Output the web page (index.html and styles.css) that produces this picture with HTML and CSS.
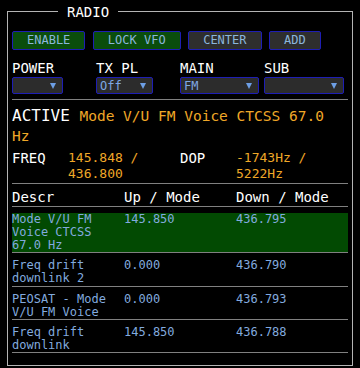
FILE: index.html
```html
<!DOCTYPE html>
<html lang="en">
<head>
    <meta charset="UTF-8">
    <title>Radio</title>
    <link rel="stylesheet" href="styles.css">
</head>
<body>
    <fieldset class="panel">
        <legend>RADIO</legend>

        <div class="buttons">
            <button class="btn on">ENABLE</button>
            <button class="btn on">LOCK VFO</button>
            <button class="btn">CENTER</button>
            <button class="btn">ADD</button>
        </div>

        <div class="controls">
            <div class="ctl">
                <div class="ctl-label">POWER</div>
                <div class="select w-power"><span class="opt"></span><span class="arrow"></span></div>
            </div>
            <div class="ctl">
                <div class="ctl-label">TX PL</div>
                <div class="select w-txpl"><span class="opt">Off</span><span class="arrow"></span></div>
            </div>
            <div class="ctl">
                <div class="ctl-label">MAIN</div>
                <div class="select w-main"><span class="opt">FM</span><span class="arrow"></span></div>
            </div>
            <div class="ctl">
                <div class="ctl-label">SUB</div>
                <div class="select w-sub"><span class="opt"></span><span class="arrow"></span></div>
            </div>
        </div>

        <hr class="rule first">

        <div class="active">
            <span class="active-label">ACTIVE</span>
            <span class="active-value">Mode V/U FM Voice CTCSS 67.0 Hz</span>
        </div>

        <div class="freq">
            <div class="freq-label">FREQ</div>
            <div class="freq-value">145.848 / 436.800</div>
            <div class="freq-label">DOP</div>
            <div class="freq-value">-1743Hz / 5222Hz</div>
        </div>

        <hr class="rule">

        <div class="table-head">
            <div>Descr</div>
            <div>Up / Mode</div>
            <div>Down / Mode</div>
        </div>

        <hr class="rule tight">

        <div class="row selected">
            <div>Mode V/U FM Voice CTCSS 67.0 Hz</div>
            <div>145.850</div>
            <div>436.795</div>
        </div>
        <div class="row">
            <div>Freq drift downlink 2</div>
            <div>0.000</div>
            <div>436.790</div>
        </div>
        <div class="row">
            <div>PEOSAT - Mode V/U FM Voice</div>
            <div>0.000</div>
            <div>436.793</div>
        </div>
        <div class="row">
            <div>Freq drift downlink</div>
            <div>145.850</div>
            <div>436.788</div>
        </div>
    </fieldset>
</body>
</html>
```

FILE: styles.css
```css
/* General Styles */
body {
    margin: 0;
    background-color: #000;
    color: #fff;
    font-family: "DejaVu Sans Mono", monospace;
}

/* Panel */
.panel {
    margin: 1px 7px 0 7px;
    padding: 0 4px 12px 4px;
    border: 1px solid #b4b4b4;
    min-width: 0;
}

.panel legend {
    margin-left: 46px;
    padding: 3px 9px 0 9px;
    font-size: 14px;
    line-height: 17px;
    color: #fff;
}

/* Buttons */
.buttons {
    display: flex;
    gap: 7.5px;
    margin-top: 10px;
}

.btn {
    height: 19px;
    padding: 0 14px;
    font-family: "DejaVu Sans Mono", monospace;
    font-size: 12px;
    line-height: 17px;
    color: #8cb6dc;
    background-color: #2e2e2e;
    border: 1px solid #1e1eb4;
    border-radius: 2px;
}

.btn.on {
    background-color: #0a4d0c;
}

/* Selects */
.controls {
    display: grid;
    grid-template-columns: repeat(4, 1fr);
    margin-top: 10px;
}

.ctl-label {
    font-size: 14px;
    line-height: 17px;
}

.select {
    display: flex;
    align-items: center;
    justify-content: space-between;
    box-sizing: border-box;
    height: 17px;
    padding: 0 6px 0 3px;
    background-color: #2c2c2c;
    border: 1px solid #1e1eb4;
    border-radius: 2px;
    font-size: 12px;
    color: #7fa8e4;
}

.w-power { width: 51px; }
.w-txpl { width: 57px; }
.w-main { width: 79px; }
.w-sub { width: 80px; }

.arrow {
    width: 0;
    height: 0;
    border-left: 3px solid transparent;
    border-right: 3px solid transparent;
    border-top: 6px solid #6d9ee4;
}

/* Rules */
.rule {
    margin: 0;
    border: none;
    border-top: 1px solid #808080;
}

.rule.first {
    margin-top: 5px;
}

/* Active */
.active {
    margin-top: 5.5px;
    line-height: 19px;
}

.active-label {
    font-size: 16px;
}

.active-value {
    font-size: 14.5px;
    color: #f0a828;
}

/* Frequency */
.freq {
    display: grid;
    grid-template-columns: 1fr 2fr 1fr 2fr;
    margin-top: 4.5px;
    margin-bottom: 1px;
    line-height: 16px;
}

.freq-label {
    font-size: 14px;
}

.freq-value {
    font-size: 13px;
    color: #f0a828;
}

/* Table */
.table-head {
    display: grid;
    grid-template-columns: repeat(3, 1fr);
    margin-top: 4.5px;
    font-size: 14px;
    line-height: 17px;
}

.row {
    display: grid;
    grid-template-columns: repeat(3, 1fr);
    margin-top: 6px;
    font-size: 12px;
    line-height: 13.2px;
    color: #82aadf;
    border-bottom: 1px solid #808080;
}

.row.selected {
    background-color: #024a02;
}
```
